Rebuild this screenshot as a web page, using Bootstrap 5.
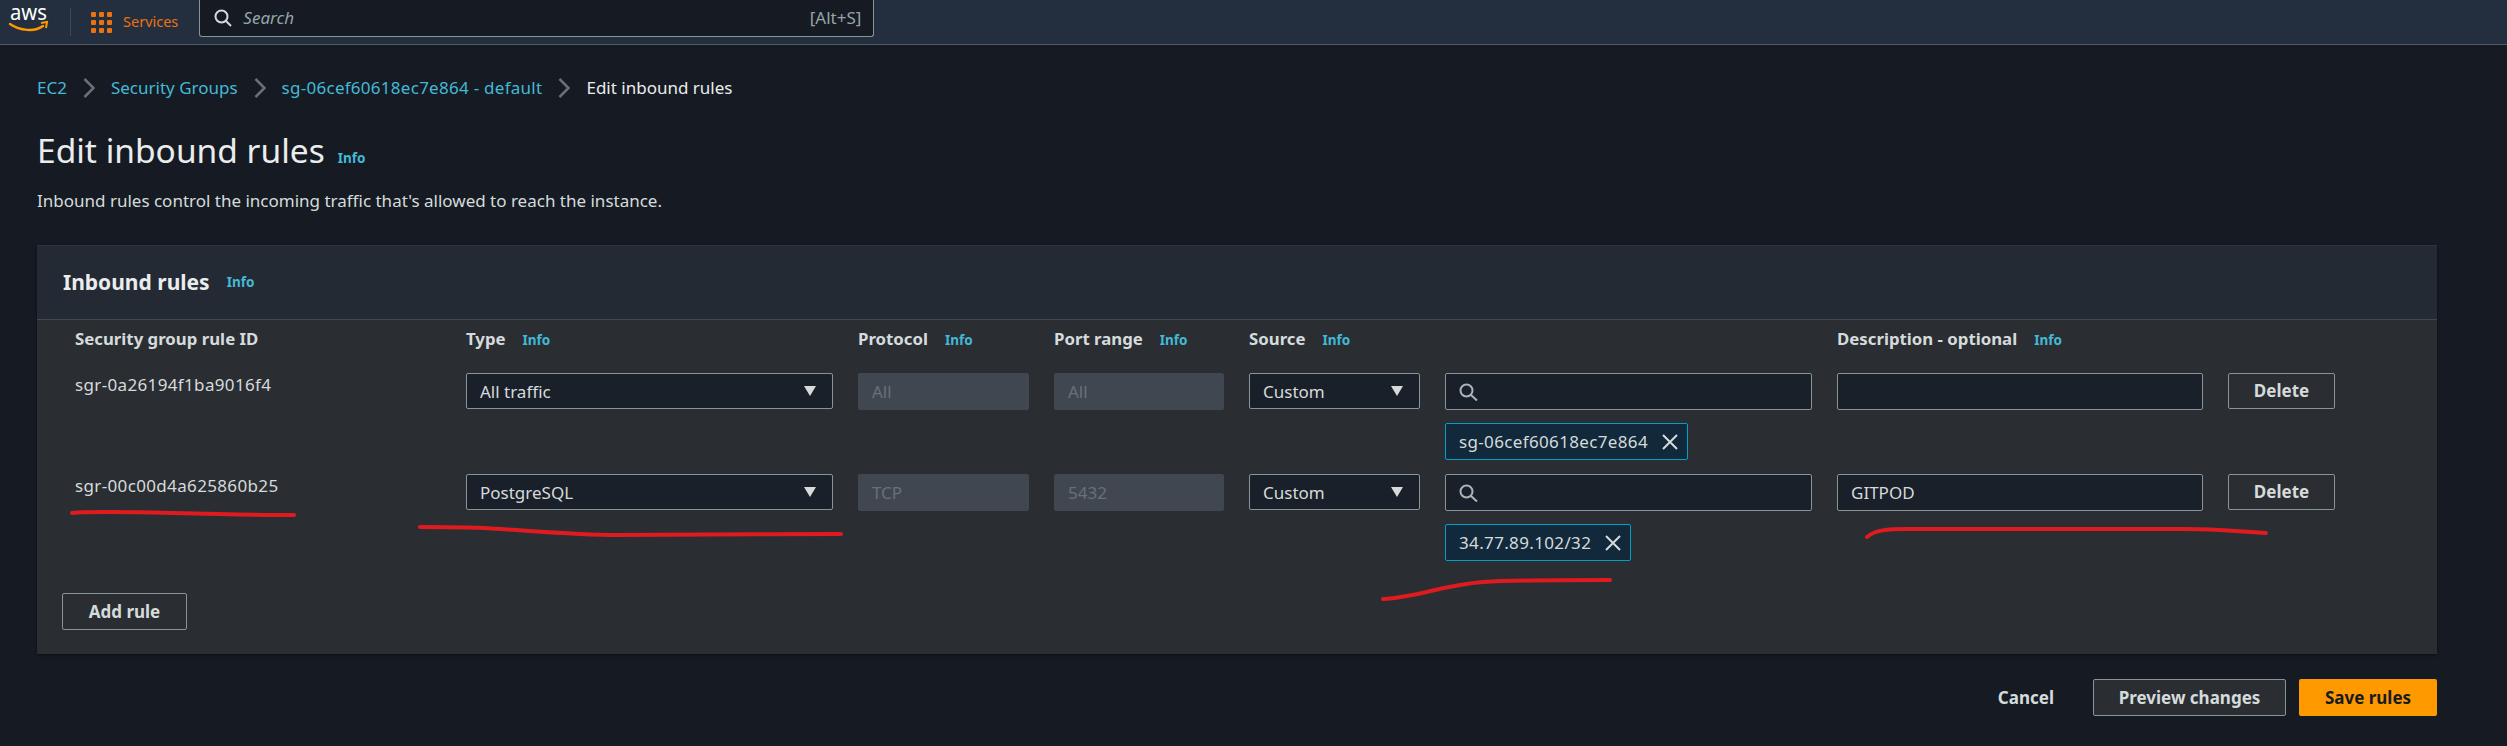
<!DOCTYPE html>
<html lang="en">
<head>
    <meta charset="UTF-8">
    <meta name="viewport" content="width=device-width, initial-scale=1.0">
    <title>Edit inbound rules</title>
    <link href="https://cdn.jsdelivr.net/npm/bootstrap@5.3.0/dist/css/bootstrap.min.css" rel="stylesheet">
    <style>
        html, body { height: 100%; }
        body {
            background: #161b23;
            color: #d5dbdb;
            font-family: "Noto Sans", "Liberation Sans", sans-serif;
            font-size: 17px;
            position: relative;
            overflow: hidden;
        }
        a { text-decoration: none; color: #44b9d6; }
        .topbar { height: 45px; background: #232f3e; border-bottom: 1px solid #535b63; padding-left: 10px; }
        .aws-logo { width: 38px; height: 44px; overflow: visible; }
        .top-divider { width: 1px; height: 28px; background: #414750; margin: 0 20px 0 22px; }
        .services-link { color: #ec7211; font-size: 14.5px; }
        .services-link svg { margin-right: 11px; }
        .top-search { width: 675px; height: 37px; margin: 0 0 7px 21px; background: #161b23; border: 1px solid #879596; border-top: 0; border-radius: 0 0 3px 3px; padding: 0 12px 0 14px; }
        .top-search em { color: #95a5a6; font-size: 17px; margin-left: 11px; }
        .top-search span { color: #95a5a6; font-size: 17px; }
        .crumbs { padding: 32px 0 0 37px; height: 66px; line-height: 22px; }
        .crumbs svg { margin: 0 16px; }
        .crumb-id { letter-spacing: .27px; }
        .crumb-now { color: #eaeded; }
        .page-title { font-size: 33.5px; font-weight: 400; color: #eaeded; margin: 0 -4px 0 0; line-height: 40px; }
        .title-block { padding: 19px 0 0 37px; height: 134px; }
        .info-link { font-size: 13.5px; font-weight: 700; margin-left: 17px; }
        .page-lead { margin: 19px 0 0; line-height: 24px; font-size: 17px; }
        .rules-panel { margin: 0 70px 0 37px; height: 409px; background: #2a2e33; box-shadow: 0 1px 3px rgba(0,0,0,.5); border-top: 1px solid #2f343a; }
        .rules-head { height: 74px; background: #232a33; border-bottom: 1px solid #414750; padding: 0 26px; }
        .rules-head h2 { font-size: 21px; font-weight: 700; margin: 0; color: #eaeded; }
        .rules-body { padding: 0 0 0 38px; }
        .rule-grid { display: grid; grid-template-columns: 366px 367px 171px 170px 171px 367px 366px 107px; column-gap: 25px; }
        .col-label { font-size: 16.8px; font-weight: 700; height: 53px; padding-top: 7px; line-height: 24px; color: #d5dbdb; white-space: nowrap; }
        .rule-id { line-height: 24px; letter-spacing: .35px; }
        .field-box { height: 37px; background: #1a2029; border: 1px solid #879596; border-radius: 2px; padding: 0 13px; color: #d5dbdb; line-height: 35px; }
        .field-pick { height: 36px; padding-right: 16px; }
        .field-off { background: #414750; border-color: #414750; color: #687078; }
        .drop-arrow { width: 0; height: 0; border-left: 6px solid transparent; border-right: 6px solid transparent; border-top: 10px solid #d5dbdb; }
        .rule-token { margin-top: 13px; height: 37px; background: #12293b; border: 1px solid #00a1c9; border-radius: 2px; padding: 0 9px 0 13px; color: #d5dbdb; letter-spacing: .35px; }
        .rule-token svg { margin-left: 14px; }
        .rule-row { height: 101px; }
        .ghost-btn { height: 36px; background: #2a2e33; border: 1px solid #879596; border-radius: 2px; color: #d5dbdb; font-weight: 700; font-size: 17px; padding: 0; }
        .add-btn { width: 125px; height: 37px; margin: 18px 0 0 -13px; }
        .page-foot { padding: 25px 70px 0 0; }
        .cancel-link { color: #d5dbdb; font-weight: 700; margin-right: 39px; }
        .preview-btn { width: 193px; height: 37px; margin-right: 13px; }
        .save-btn { width: 138px; height: 37px; background: #f90; border: 0; border-radius: 2px; color: #161b23; font-weight: 700; font-size: 17px; padding: 0; }
        .red-marks { position: absolute; left: 0; top: 0; pointer-events: none; }
    </style>
</head>
<body>
    <nav class="topbar d-flex align-items-center">
        <svg class="aws-logo" viewBox="0 0 38 44">
            <text x="0" y="20" fill="#fff" font-family="Noto Sans, sans-serif" font-size="22" textLength="37" lengthAdjust="spacingAndGlyphs">aws</text>
            <path d="M0 24c10 7 25 8 33 2" fill="none" stroke="#f90" stroke-width="2.4" stroke-linecap="round"/>
            <path d="M31 23l6-1-1 6" fill="none" stroke="#f90" stroke-width="2"/>
        </svg>
        <div class="top-divider"></div>
        <a class="services-link d-flex align-items-center" href="#">
            <svg width="21" height="21" viewBox="0 0 21 21" fill="#ec7211">
                <rect width="5" height="5" rx="1"/><rect x="8" width="5" height="5" rx="1"/><rect x="16" width="5" height="5" rx="1"/>
                <rect y="8" width="5" height="5" rx="1"/><rect x="8" y="8" width="5" height="5" rx="1"/><rect x="16" y="8" width="5" height="5" rx="1"/>
                <rect y="16" width="5" height="5" rx="1"/><rect x="8" y="16" width="5" height="5" rx="1"/><rect x="16" y="16" width="5" height="5" rx="1"/>
            </svg>
            Services
        </a>
        <div class="top-search d-flex align-items-center">
            <svg width="18" height="18" viewBox="0 0 18 18" fill="none" stroke="#d5dbdb" stroke-width="2"><circle cx="7.5" cy="7.5" r="6"/><path d="M12 12l5 5"/></svg>
            <em>Search</em>
            <span class="ms-auto">[Alt+S]</span>
        </div>
    </nav>

    <div class="crumbs d-flex align-items-start">
        <a href="#">EC2</a>
        <svg width="12" height="22" viewBox="0 0 12 22" fill="none" stroke="#687078" stroke-width="2.5"><path d="M1.5 2l9 9-9 9"/></svg>
        <a href="#">Security Groups</a>
        <svg width="12" height="22" viewBox="0 0 12 22" fill="none" stroke="#687078" stroke-width="2.5"><path d="M1.5 2l9 9-9 9"/></svg>
        <a class="crumb-id" href="#">sg-06cef60618ec7e864 - default</a>
        <svg width="12" height="22" viewBox="0 0 12 22" fill="none" stroke="#687078" stroke-width="2.5"><path d="M1.5 2l9 9-9 9"/></svg>
        <span class="crumb-now">Edit inbound rules</span>
    </div>

    <div class="title-block">
        <div class="d-flex align-items-baseline">
            <h1 class="page-title">Edit inbound rules</h1>
            <a class="info-link" href="#">Info</a>
        </div>
        <p class="page-lead">Inbound rules control the incoming traffic that's allowed to reach the instance.</p>
    </div>

    <section class="rules-panel">
        <div class="rules-head d-flex align-items-center">
            <h2>Inbound rules</h2>
            <a class="info-link" href="#">Info</a>
        </div>
        <div class="rules-body">
            <div class="rule-grid">
                <div class="col-label">Security group rule ID</div>
                <div class="col-label">Type<a class="info-link" href="#">Info</a></div>
                <div class="col-label">Protocol<a class="info-link" href="#">Info</a></div>
                <div class="col-label">Port range<a class="info-link" href="#">Info</a></div>
                <div class="col-label">Source<a class="info-link" href="#">Info</a></div>
                <div></div>
                <div class="col-label">Description - optional<a class="info-link" href="#">Info</a></div>
                <div></div>
            </div>

            <div class="rule-grid rule-row">
                <div class="rule-id">sgr-0a26194f1ba9016f4</div>
                <div class="field-box field-pick d-flex align-items-center justify-content-between">All traffic<i class="drop-arrow"></i></div>
                <div class="field-box field-off">All</div>
                <div class="field-box field-off">All</div>
                <div class="field-box field-pick d-flex align-items-center justify-content-between">Custom<i class="drop-arrow"></i></div>
                <div>
                    <div class="field-box d-flex align-items-center">
                        <svg width="19" height="18" viewBox="0 0 19 18" fill="none" stroke="#aab7b8" stroke-width="2"><circle cx="7.5" cy="7.5" r="6"/><path d="M12 12l6 5.5"/></svg>
                    </div>
                    <div class="d-flex"><div class="rule-token d-flex align-items-center">sg-06cef60618ec7e864
                        <svg width="16" height="16" viewBox="0 0 16 16" stroke="#d5dbdb" stroke-width="2"><path d="M1 1l14 14M15 1L1 15"/></svg></div></div>
                </div>
                <div class="field-box"></div>
                <button class="ghost-btn" type="button">Delete</button>
            </div>

            <div class="rule-grid rule-row">
                <div class="rule-id">sgr-00c00d4a625860b25</div>
                <div class="field-box field-pick d-flex align-items-center justify-content-between">PostgreSQL<i class="drop-arrow"></i></div>
                <div class="field-box field-off">TCP</div>
                <div class="field-box field-off">5432</div>
                <div class="field-box field-pick d-flex align-items-center justify-content-between">Custom<i class="drop-arrow"></i></div>
                <div>
                    <div class="field-box d-flex align-items-center">
                        <svg width="19" height="18" viewBox="0 0 19 18" fill="none" stroke="#aab7b8" stroke-width="2"><circle cx="7.5" cy="7.5" r="6"/><path d="M12 12l6 5.5"/></svg>
                    </div>
                    <div class="d-flex"><div class="rule-token d-flex align-items-center">34.77.89.102/32
                        <svg width="16" height="16" viewBox="0 0 16 16" stroke="#d5dbdb" stroke-width="2"><path d="M1 1l14 14M15 1L1 15"/></svg></div></div>
                </div>
                <div class="field-box">GITPOD</div>
                <button class="ghost-btn" type="button">Delete</button>
            </div>

            <button class="ghost-btn add-btn" type="button">Add rule</button>
        </div>
    </section>

    <div class="page-foot d-flex justify-content-end align-items-center">
        <a class="cancel-link" href="#">Cancel</a>
        <button class="ghost-btn preview-btn" type="button">Preview changes</button>
        <button class="save-btn" type="button">Save rules</button>
    </div>

    <!-- red pen marks drawn on top of the screenshot -->
    <svg class="red-marks" width="2507" height="746" fill="none" stroke="#e01b1f" stroke-width="4" stroke-linecap="round">
        <path d="M72 513c20-2 60-1 100 0 40 1 80 2 122 2"/>
        <path d="M420 527c20 0 45 0 63 1 40 2 90 7 134 7 70 0 150-1 224-1"/>
        <path d="M1383 599c35-2 60-14 100-17 35-2 85-2 127-2"/>
        <path d="M1867 537c8-7 20-8 40-8h280c30 0 55 3 79 4"/>
    </svg>
</body>
</html>
